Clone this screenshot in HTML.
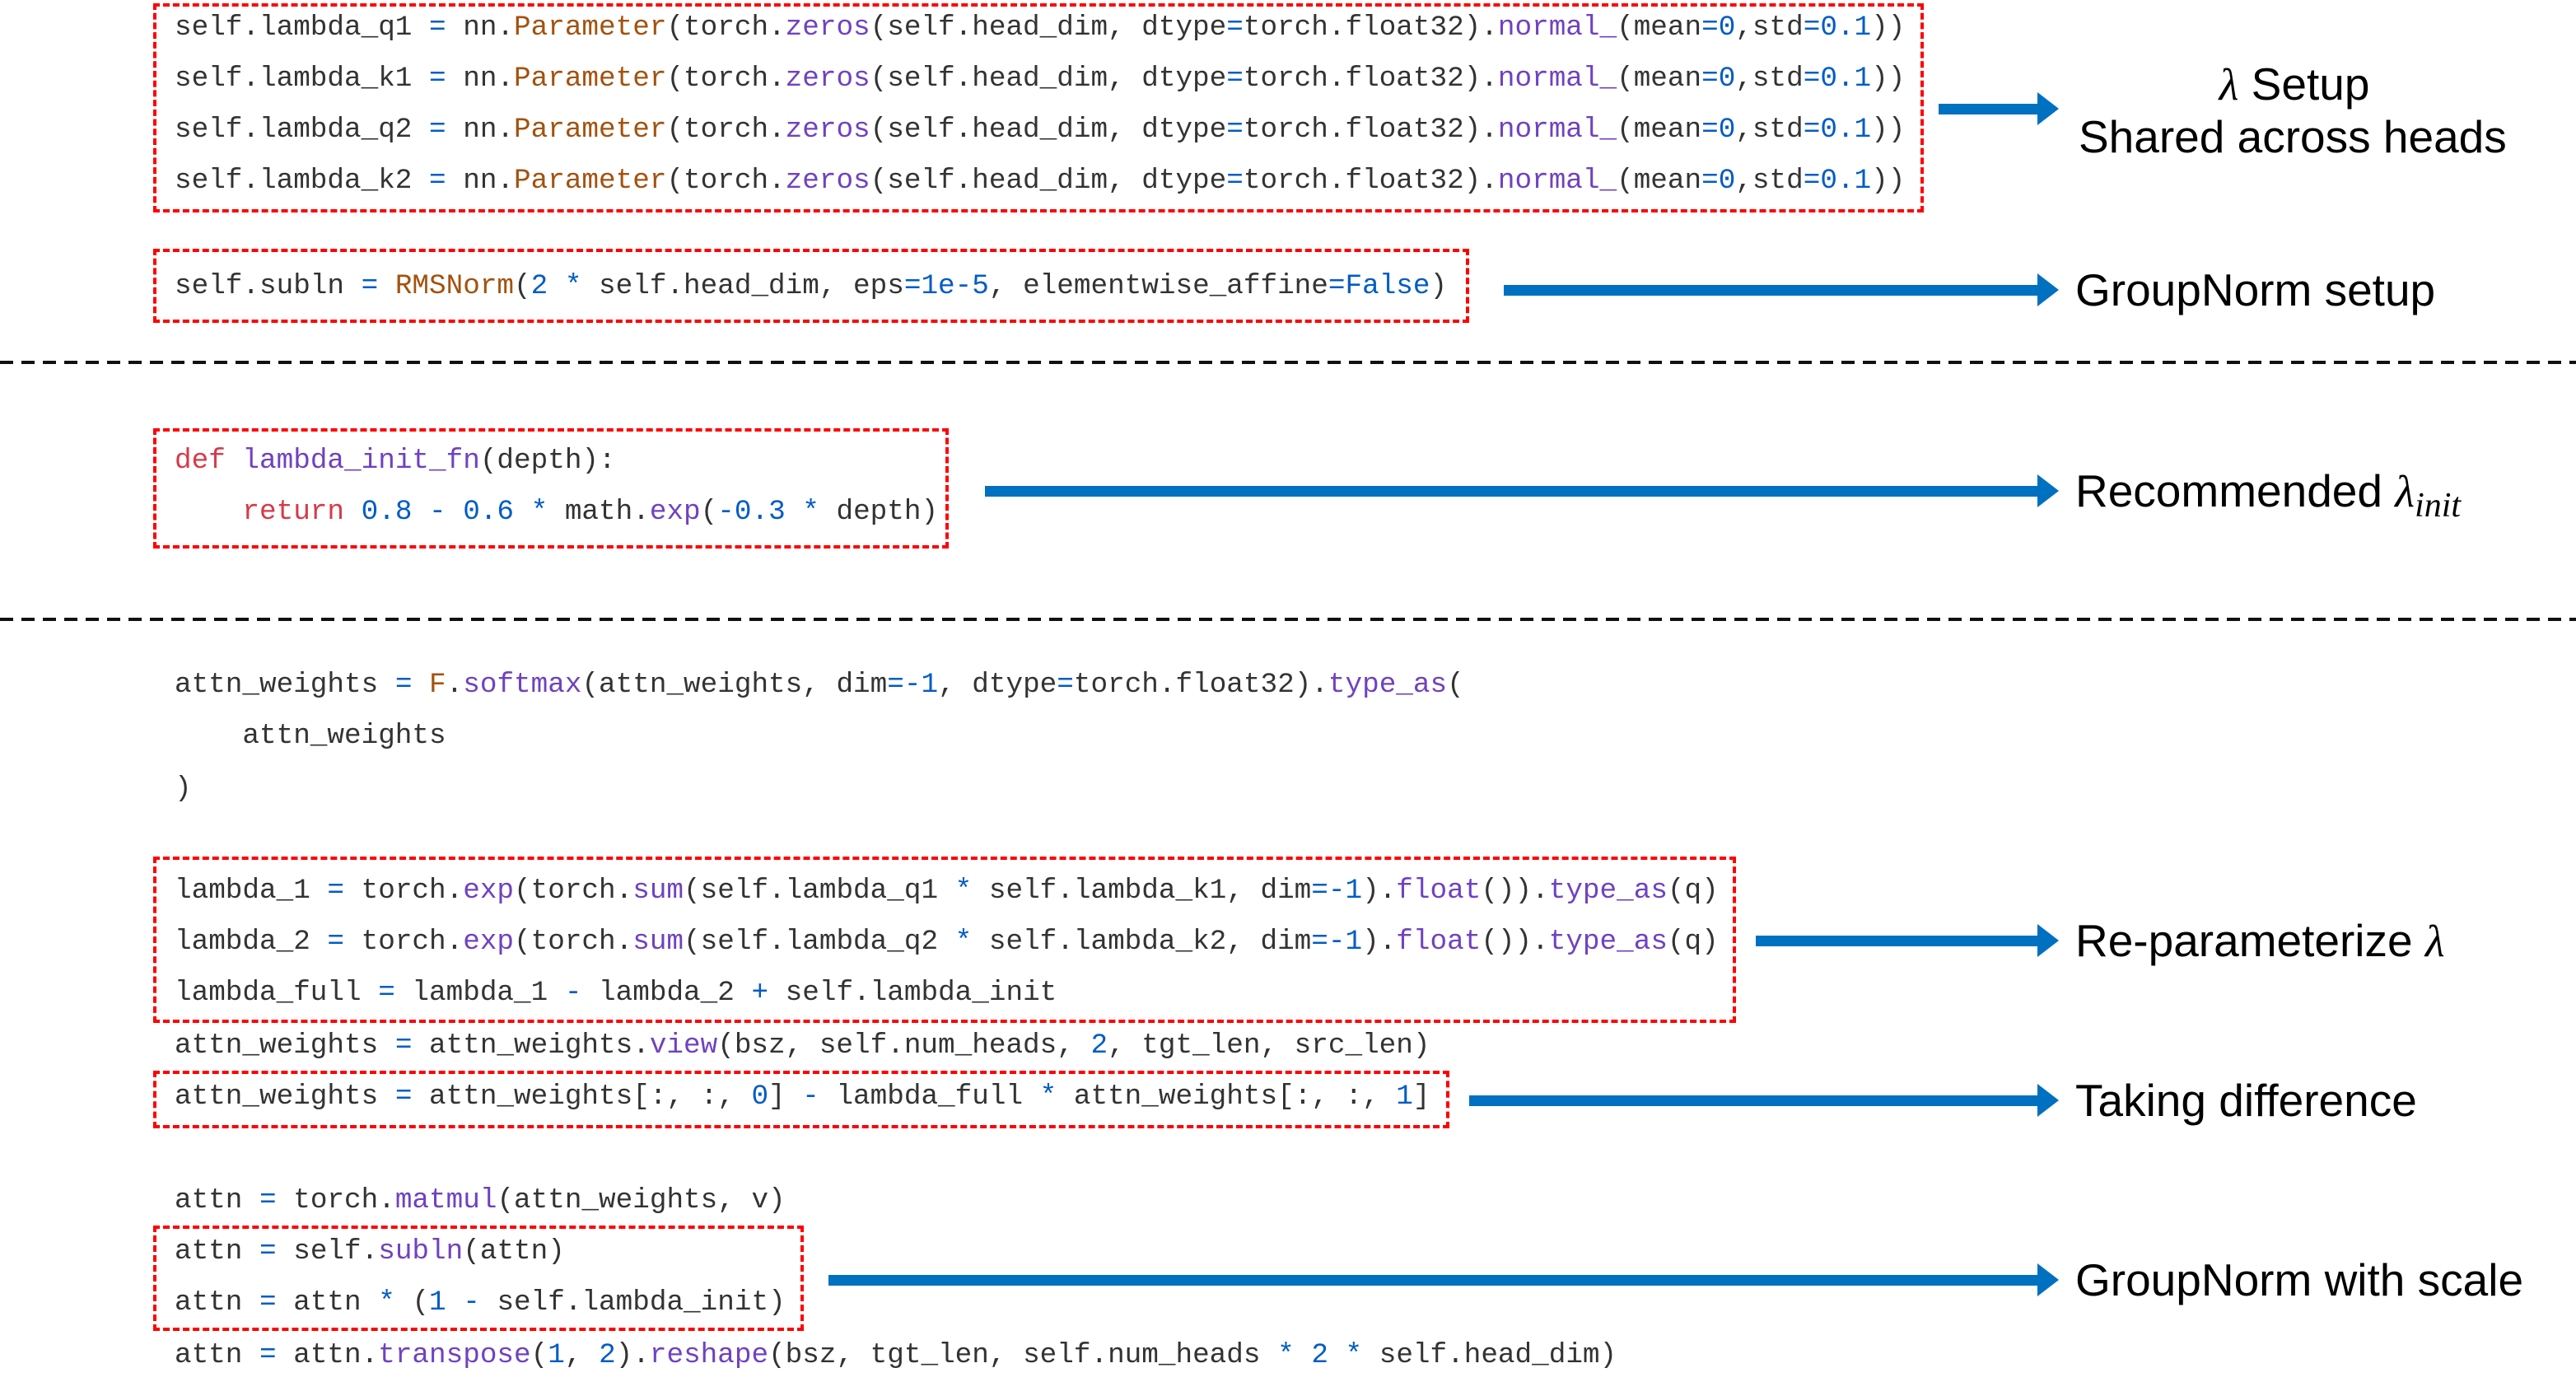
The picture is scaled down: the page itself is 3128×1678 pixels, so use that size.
<!DOCTYPE html>
<html><head><meta charset="utf-8"><style>
body{margin:0;width:3128px;height:1678px;background:#fff;position:relative;overflow:hidden}
.c{position:absolute;left:212px;font-family:"Liberation Mono",monospace;font-size:34.35px;line-height:40px;color:#333;white-space:pre}
.k{color:#d73a49}.f{color:#6f42c1}.o{color:#005cc5}.p{color:#a3520f}
.box{position:absolute;border:4px dashed #f00;box-sizing:border-box}
.l{position:absolute;left:2520px;font-family:"Liberation Sans",sans-serif;font-size:55px;line-height:60px;color:#000;white-space:nowrap}
svg{position:absolute;left:0;top:0}
</style></head><body>
<div class="box" style="left:186px;top:4px;width:2150px;height:254px"></div>
<div class="box" style="left:186px;top:302px;width:1598px;height:90px"></div>
<div class="box" style="left:186px;top:520px;width:966px;height:146px"></div>
<div class="box" style="left:186px;top:1040px;width:1922px;height:202px"></div>
<div class="box" style="left:186px;top:1300px;width:1574px;height:70px"></div>
<div class="box" style="left:186px;top:1488px;width:790px;height:128px"></div>

<div class="c" style="top:14px">self.lambda_q1 <span class="o">=</span> nn.<span class="p">Parameter</span>(torch.<span class="f">zeros</span>(self.head_dim, dtype<span class="o">=</span>torch.float32).<span class="f">normal_</span>(mean<span class="o">=0</span>,std<span class="o">=0.1</span>))</div>
<div class="c" style="top:76px">self.lambda_k1 <span class="o">=</span> nn.<span class="p">Parameter</span>(torch.<span class="f">zeros</span>(self.head_dim, dtype<span class="o">=</span>torch.float32).<span class="f">normal_</span>(mean<span class="o">=0</span>,std<span class="o">=0.1</span>))</div>
<div class="c" style="top:138px">self.lambda_q2 <span class="o">=</span> nn.<span class="p">Parameter</span>(torch.<span class="f">zeros</span>(self.head_dim, dtype<span class="o">=</span>torch.float32).<span class="f">normal_</span>(mean<span class="o">=0</span>,std<span class="o">=0.1</span>))</div>
<div class="c" style="top:200px">self.lambda_k2 <span class="o">=</span> nn.<span class="p">Parameter</span>(torch.<span class="f">zeros</span>(self.head_dim, dtype<span class="o">=</span>torch.float32).<span class="f">normal_</span>(mean<span class="o">=0</span>,std<span class="o">=0.1</span>))</div>
<div class="c" style="top:328px">self.subln <span class="o">=</span> <span class="p">RMSNorm</span>(<span class="o">2 *</span> self.head_dim, eps<span class="o">=1e-5</span>, elementwise_affine<span class="o">=False</span>)</div>
<div class="c" style="top:540px"><span class="k">def</span> <span class="f">lambda_init_fn</span>(depth):</div>
<div class="c" style="top:602px">    <span class="k">return</span> <span class="o">0.8 - 0.6 *</span> math.<span class="f">exp</span>(<span class="o">-0.3 *</span> depth)</div>
<div class="c" style="top:812px">attn_weights <span class="o">=</span> <span class="p">F</span>.<span class="f">softmax</span>(attn_weights, dim<span class="o">=-1</span>, dtype<span class="o">=</span>torch.float32).<span class="f">type_as</span>(</div>
<div class="c" style="top:874px">    attn_weights</div>
<div class="c" style="top:938px">)</div>
<div class="c" style="top:1062px">lambda_1 <span class="o">=</span> torch.<span class="f">exp</span>(torch.<span class="f">sum</span>(self.lambda_q1 <span class="o">*</span> self.lambda_k1, dim<span class="o">=-1</span>).<span class="f">float</span>()).<span class="f">type_as</span>(q)</div>
<div class="c" style="top:1124px">lambda_2 <span class="o">=</span> torch.<span class="f">exp</span>(torch.<span class="f">sum</span>(self.lambda_q2 <span class="o">*</span> self.lambda_k2, dim<span class="o">=-1</span>).<span class="f">float</span>()).<span class="f">type_as</span>(q)</div>
<div class="c" style="top:1186px">lambda_full <span class="o">=</span> lambda_1 <span class="o">-</span> lambda_2 <span class="o">+</span> self.lambda_init</div>
<div class="c" style="top:1250px">attn_weights <span class="o">=</span> attn_weights.<span class="f">view</span>(bsz, self.num_heads, <span class="o">2</span>, tgt_len, src_len)</div>
<div class="c" style="top:1312px">attn_weights <span class="o">=</span> attn_weights[:, :, <span class="o">0</span>] <span class="o">-</span> lambda_full <span class="o">*</span> attn_weights[:, :, <span class="o">1</span>]</div>
<div class="c" style="top:1438px">attn <span class="o">=</span> torch.<span class="f">matmul</span>(attn_weights, v)</div>
<div class="c" style="top:1500px">attn <span class="o">=</span> self.<span class="f">subln</span>(attn)</div>
<div class="c" style="top:1562px">attn <span class="o">=</span> attn <span class="o">*</span> (<span class="o">1 -</span> self.lambda_init)</div>
<div class="c" style="top:1626px">attn <span class="o">=</span> attn.<span class="f">transpose</span>(<span class="o">1</span>, <span class="o">2</span>).<span class="f">reshape</span>(bsz, tgt_len, self.num_heads <span class="o">*</span> <span class="o">2 *</span> self.head_dim)</div>

<svg width="3128" height="1678">
<g stroke="#111" stroke-width="4" stroke-dasharray="16 10">
<line x1="0" y1="440" x2="3128" y2="440"/><line x1="0" y1="752" x2="3128" y2="752"/>
</g>
<g fill="#0070c0">
<rect x="2354" y="126" width="124" height="13"/><polygon points="2474,112 2500,132 2474,152"/>
<rect x="1826" y="346" width="652" height="13"/><polygon points="2474,332 2500,352 2474,372"/>
<rect x="1196" y="590" width="1282" height="13"/><polygon points="2474,576 2500,596 2474,616"/>
<rect x="2132" y="1136" width="346" height="13"/><polygon points="2474,1122 2500,1142 2474,1162"/>
<rect x="1784" y="1330" width="694" height="13"/><polygon points="2474,1316 2500,1336 2474,1356"/>
<rect x="1006" y="1548" width="1472" height="13"/><polygon points="2474,1534 2500,1554 2474,1574"/>
</g></svg>

<div class="l" style="left:2524px;width:524px;text-align:center;top:72px"><i style="font-family:'Liberation Serif',serif">λ</i> Setup</div>
<div class="l" style="left:2524px;top:136px">Shared across heads</div>
<div class="l" style="top:322px">GroupNorm setup</div>
<div class="l" style="top:566px">Recommended <i style="font-family:'Liberation Serif',serif">λ</i><sub style="font-family:'Liberation Serif',serif;font-style:italic;font-size:42px;vertical-align:-12px">init</sub></div>
<div class="l" style="top:1112px">Re-parameterize <i style="font-family:'Liberation Serif',serif">λ</i></div>
<div class="l" style="top:1306px">Taking difference</div>
<div class="l" style="top:1524px">GroupNorm with scale</div>
</body></html>
